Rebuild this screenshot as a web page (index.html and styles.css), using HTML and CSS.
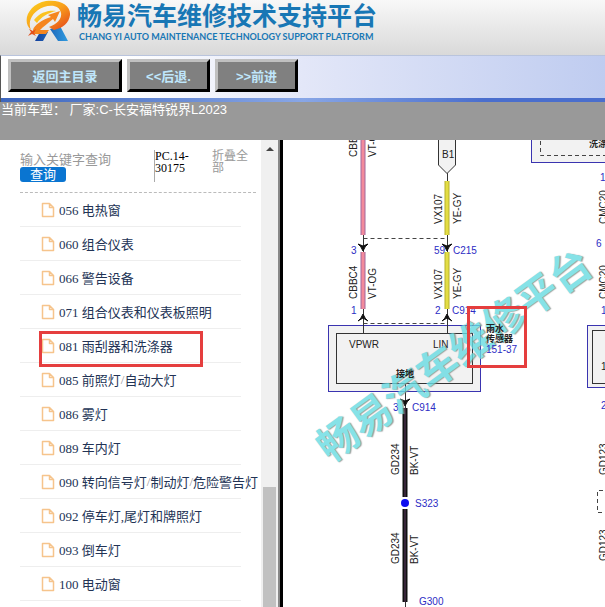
FILE: index.html
```
<!DOCTYPE html>
<html lang="zh-CN">
<head>
    <meta charset="UTF-8">
    <meta name="viewport" content="width=device-width, initial-scale=1.0">
    <title>畅易汽车维修技术支持平台</title>
    <link rel="stylesheet" href="styles.css">
</head>
<body>
    <header class="header">
        <svg class="logo" width="48" height="42" viewBox="0 0 48 42" aria-hidden="true">
            <defs>
                <linearGradient id="fire" x1="0" y1="0" x2="1" y2="1">
                    <stop offset="0" stop-color="#fbd51c"/>
                    <stop offset="0.5" stop-color="#f9a01b"/>
                    <stop offset="1" stop-color="#e2401b"/>
                </linearGradient>
                <linearGradient id="sea" x1="0" y1="0" x2="1" y2="0">
                    <stop offset="0" stop-color="#123f9c"/>
                    <stop offset="1" stop-color="#2f9be0"/>
                </linearGradient>
            </defs>
            <path d="M15 32 L23 32 L18 41 L10 41 Z M25 29 L35 26 L43 41 L33 41 Z" fill="url(#sea)"/>
            <path d="M6 30 C-4 21 4 4 21 1 C36 -1 46 6 45 15 C44 23 38 28 29 30 L24 27 C33 24 37 18 36 13 C35 6 27 4 19 7 C8 11 2 21 6 30 Z" fill="url(#fire)"/>
            <path d="M8 30 C9 25 18 19 26 17 L23 15 L35 11 L30 22 L28 19 C23 23 18 27 15 30 L24 30 L21 34 L8 34 Z" fill="#f5861f"/>
            <path d="M9 20 C15 12 24 10 31 11 C23 13 16 17 12 23 Z" fill="#fbc220"/>
            <path d="M4 29 L8 31 L11 29 L9 33 L11 36 L7 34 L3 36 L6 32 Z" fill="#e2501c"/>
        </svg>
        <div class="brand">
            <h1>畅易汽车维修技术支持平台</h1>
            <p>CHANG YI AUTO MAINTENANCE TECHNOLOGY SUPPORT PLATFORM</p>
        </div>
    </header>

    <nav class="toolbar">
        <button type="button" class="wide">返回主目录</button>
        <button type="button">&lt;&lt;后退.</button>
        <button type="button">&gt;&gt;前进</button>
    </nav>

    <div class="model">当前车型： 厂家:C-长安福特锐界L2023</div>

    <main class="content">
        <aside class="sidebar">
            <div class="tree">
                <div class="search">
                    <form class="search-form">
                        <input type="text" placeholder="输入关键字查询" aria-label="输入关键字查询">
                        <button type="button">查询</button>
                    </form>
                    <div class="code">PC.14-30175</div>
                    <a href="#" class="fold">折叠全部</a>
                </div>
                <svg class="defs" width="0" height="0" aria-hidden="true">
                    <symbol id="file" viewBox="0 0 14 16">
                        <path d="M1.5 1.5 H8.5 L12.5 5.5 V14.5 H1.5 Z M8.5 1.5 V5.5 H12.5" fill="none" stroke="#f6c48c" stroke-width="1.5" stroke-linejoin="round"/>
                    </symbol>
                </svg>
                <ul class="list">
                    <li><a href="#"><svg><use href="#file"/></svg>056 电热窗</a></li>
                    <li><a href="#"><svg><use href="#file"/></svg>060 组合仪表</a></li>
                    <li><a href="#"><svg><use href="#file"/></svg>066 警告设备</a></li>
                    <li><a href="#"><svg><use href="#file"/></svg>071 组合仪表和仪表板照明</a></li>
                    <li class="marked"><a href="#"><svg><use href="#file"/></svg>081 雨刮器和洗涤器</a></li>
                    <li><a href="#"><svg><use href="#file"/></svg>085 前照灯<i>/</i>自动大灯</a></li>
                    <li><a href="#"><svg><use href="#file"/></svg>086 雾灯</a></li>
                    <li><a href="#"><svg><use href="#file"/></svg>089 车内灯</a></li>
                    <li><a href="#"><svg><use href="#file"/></svg>090 转向信号灯<i>/</i>制动灯<i>/</i>危险警告灯</a></li>
                    <li><a href="#"><svg><use href="#file"/></svg>092 停车灯,尾灯和牌照灯</a></li>
                    <li><a href="#"><svg><use href="#file"/></svg>093 倒车灯</a></li>
                    <li><a href="#"><svg><use href="#file"/></svg>100 电动窗</a></li>
                </ul>
            </div>
            <div class="scrollbar">
                <span class="up"></span>
                <span class="thumb"></span>
            </div>
        </aside>

        <section class="diagram">
            <svg width="480" height="600" viewBox="0 0 480 600">
                <defs>
                    <path id="down" d="M-5 -3 Q-2 -1 0 4 Q2 -1 5 -3 L0 -1 Z" class="arrow"/>
                    <path id="up" d="M-5 4 Q-2 2 0 -3 Q2 2 5 4 L0 1 Z" class="arrow"/>
                </defs>

                <!-- washer module, top right -->
                <rect x="248.5" y="-40.5" width="200" height="63" class="module"/>
                <path d="M257.5 -20 V15.5 H440" class="dash"/>
                <text x="306" y="7" class="cn">洗涤器</text>

                <!-- rain sensor -->
                <rect x="45.5" y="185.5" width="152" height="66" class="module"/>
                <rect x="53.5" y="193.5" width="136" height="50" class="inner"/>

                <!-- module on the right -->
                <rect x="304.5" y="185.5" width="120" height="62" class="module"/>
                <rect x="309.5" y="190.5" width="110" height="53" class="inner"/>
                <path d="M320 350.5 H314.5 V372.5 H320" class="dash"/>

                <!-- wires -->
                <path d="M80.5 0 V193 M164.5 33 V193 M122.5 243 V467" class="lead"/>
                <path d="M80.5 98.5 H164 M80.5 183.5 H164" class="dash"/>
                <path d="M80 0 V95 M80 112 V169" class="wire violet"/>
                <path d="M80 0 V95 M80 112 V169" class="core pink"/>
                <path d="M164 41 V95 M164 112 V169" class="wire olive"/>
                <path d="M164 41 V95 M164 112 V169" class="core yellow"/>
                <path d="M122 268 V357 M122 369 V462" class="wire black"/>
                <path d="M122 268 V357 M122 369 V462" class="core plum"/>
                <path d="M122 357 V369" stroke="#fff" stroke-width="6"/>
                <circle cx="122" cy="363" r="4" fill="#0d0df0"/>
                <path d="M155.5 -5 V25 L164 33.5 L172.5 25 V-5" class="tag"/>

                <use href="#down" x="80" y="107"/>
                <use href="#down" x="164" y="107"/>
                <use href="#up" x="80" y="177"/>
                <use href="#up" x="164" y="177"/>
                <use href="#down" x="122" y="262"/>

                <g class="label">
                    <text transform="translate(74 17) rotate(-90)">CBBC4</text>
                    <text transform="translate(93 17) rotate(-90)">VT-OG</text>
                    <text transform="translate(74 159) rotate(-90)">CBBC4</text>
                    <text transform="translate(93 159) rotate(-90)">VT-OG</text>
                    <text transform="translate(159 84) rotate(-90)">VX107</text>
                    <text transform="translate(178 84) rotate(-90)">YE-GY</text>
                    <text transform="translate(159 159) rotate(-90)">VX107</text>
                    <text transform="translate(178 159) rotate(-90)">YE-GY</text>
                    <text transform="translate(116 335) rotate(-90)">GD234</text>
                    <text transform="translate(135 335) rotate(-90)">BK-VT</text>
                    <text transform="translate(116 424) rotate(-90)">GD234</text>
                    <text transform="translate(135 424) rotate(-90)">BK-VT</text>
                    <text transform="translate(324 84) rotate(-90)">CMC20</text>
                    <text transform="translate(324 159) rotate(-90)">CMC20</text>
                    <text transform="translate(324 335) rotate(-90)">GD123</text>
                    <text transform="translate(324 421) rotate(-90)">GD123</text>
                    <text x="159" y="18">B1</text>
                    <text x="66" y="208">VPWR</text>
                    <text x="150" y="208">LIN</text>
                    <text x="318" y="230">1</text>
                </g>

                <g class="label pin">
                    <text x="68" y="114">3</text>
                    <text x="151" y="114">59</text>
                    <text x="170" y="114">C215</text>
                    <text x="68" y="174">1</text>
                    <text x="152" y="174">2</text>
                    <text x="169" y="174">C914</text>
                    <text x="110" y="271">3</text>
                    <text x="129" y="271">C914</text>
                    <text x="132" y="367">S323</text>
                    <text x="136" y="465">G300</text>
                    <text x="317" y="41">1</text>
                    <text x="313" y="107">6</text>
                    <text x="318" y="174">1</text>
                    <text x="318" y="269">2</text>
                </g>

                <text class="watermark" transform="translate(171 215) rotate(-36)" y="15">畅易汽车维修平台</text>

                <text x="113" y="237" class="cn">接地</text>
                <text x="203" y="192" class="cn">雨水</text>
                <text x="203" y="202" class="cn">传感器</text>
                <text x="203" y="213" class="label pin">151-37</text>

                <rect x="185.5" y="167.5" width="57" height="59" class="mark"/>
            </svg>
        </section>
    </main>
</body>
</html>
```
FILE: styles.css
```
*,
*::after {
    box-sizing: border-box;
}
body {
    display: flex;
    flex-direction: column;
    height: 100vh;
    margin: 0;
    overflow: hidden;
    background: #fff;
    font-family: "Liberation Sans", "Noto Sans CJK SC", sans-serif;
    font-size: 13px;
}
.header {
    display: flex;
    flex: none;
    height: 55px;
    padding-left: 25px;
    background: linear-gradient(#f8f8f8, #d9d9d9);
}
.logo {
    flex: none;
}
.brand {
    padding: 2px 0 0 4px;
    color: #1877b5;
    white-space: nowrap;
}
.brand h1 {
    margin: 0;
    font-size: 25px;
    line-height: 28px;
}
.brand p {
    margin: 0 0 0 2px;
    font-family: Lato, sans-serif;
    font-size: 9px;
    font-weight: bold;
    line-height: 14px;
}

.toolbar {
    display: flex;
    flex: none;
    gap: 5px;
    height: 47px;
    padding: 3px 7px 8px;
    border-top: 1px solid #b9c4dd;
    border-left: 1px solid #555;
    background:
        linear-gradient(90deg, #3d66bd, #88a6e6 50%, #4a6ecd 80%) bottom / 100% 4px no-repeat,
        linear-gradient(90deg, #fff 20%, #e3e7f8 50%, #bfccf0);
}
.toolbar button {
    width: 83px;
    height: 33px;
    padding: 0;
    border: 3px solid;
    border-color: #c0c0c0 #000 #000 #c0c0c0;
    background: #808080;
    color: #bfe6fb;
    font-family: inherit;
    font-size: 13px;
    font-weight: bold;
}
.toolbar .wide {
    width: 114px;
}
.model {
    flex: none;
    height: 38px;
    padding-left: 1px;
    background: #999;
    color: #fff;
    line-height: 16px;
}

.content {
    display: flex;
    flex: 1;
    min-height: 0;
}
.sidebar {
    display: flex;
    flex: none;
    width: 283px;
    border-right: 3px solid #000;
}
.tree {
    flex: 1;
    min-width: 0;
    padding-left: 20px;
    font-family: "Liberation Serif", "Noto Sans CJK SC", serif;
}
.search {
    display: flex;
    height: 53px;
    margin-right: 5px;
    padding-top: 10px;
    border-bottom: 1px dashed #bbb;
}
.search-form {
    display: flex;
    flex-direction: column;
    align-items: flex-start;
    width: 134px;
    padding-top: 2px;
}
.search input {
    width: 100%;
    height: 15px;
    padding: 0;
    border: 0;
    background: none;
    font-family: inherit;
    font-size: 13px;
}
.search input::placeholder {
    color: #999;
}
.search button {
    width: 46px;
    height: 15px;
    padding: 0;
    border: 0;
    border-radius: 3px;
    background: #0a75d1;
    color: #fff;
    font-family: inherit;
    font-size: 13px;
    line-height: 15px;
}
.code {
    width: 40px;
    height: 32px;
    margin-right: 18px;
    border-left: 1px solid #aaa;
    font-size: 12px;
    line-height: 12px;
}
.fold {
    width: 36px;
    color: #999;
    font-size: 12px;
    line-height: 12px;
    text-decoration: none;
}
.defs {
    display: block;
}
.list {
    margin: 0 20px 0 0;
    padding: 0;
    list-style: none;
}
.list li {
    position: relative;
    height: 34px;
    border-bottom: 1px solid #eee;
}
.list a {
    display: flex;
    align-items: center;
    height: 33px;
    padding-left: 21px;
    color: #223355;
    text-decoration: none;
    white-space: pre;
}
.list svg {
    flex: none;
    width: 14px;
    height: 16px;
    margin-right: 4px;
}
.list i {
    color: #999;
    font-style: normal;
}
.marked::after {
    content: "";
    position: absolute;
    top: 2px;
    left: 19px;
    width: 164px;
    height: 36px;
    border: 3px solid #e53e3e;
}
.scrollbar {
    display: flex;
    flex-direction: column;
    align-items: center;
    justify-content: space-between;
    width: 19px;
    padding-top: 7px;
    border-right: 2px solid #888;
    background: #f0f0f0;
}
.up {
    border: 4px solid transparent;
    border-top: 0;
    border-bottom-color: #444;
}
.thumb {
    width: 13px;
    height: 26%;
    background: #c1c1c1;
}

.diagram {
    flex: 1;
    min-width: 0;
    overflow: hidden;
}
.diagram svg {
    display: block;
}
.module {
    fill: #f2f2f2;
    stroke: #3a34b0;
}
.inner {
    fill: #f2f2f2;
    stroke: #333;
}
.dash {
    fill: none;
    stroke: #444;
    stroke-dasharray: 4 3;
}
.lead {
    stroke: #333;
}
.tag {
    fill: #f2f2f2;
    stroke: #333;
}
.wire {
    stroke-width: 5;
}
.core {
    stroke-width: 3;
}
.violet {
    stroke: #a0689c;
}
.pink {
    stroke: #f38a9b;
}
.olive {
    stroke: #b5b02c;
}
.yellow {
    stroke: #e3dd45;
}
.black {
    stroke: #111;
}
.plum {
    stroke: #5d3a60;
    stroke-width: 1;
}
.arrow {
    fill: #111;
    stroke: #111;
}
.label {
    fill: #222;
    font-size: 10px;
}
.pin {
    fill: #2c2cc4;
}
.cn {
    fill: #222;
    font-size: 9px;
    font-weight: bold;
}
.watermark {
    fill: #68dbe2;
    font-size: 41px;
    font-weight: bold;
    opacity: 0.8;
    text-anchor: middle;
    text-shadow: 1px 1px 1px #888;
}
.mark {
    fill: none;
    stroke: #e53e3e;
    stroke-width: 3;
}
```
